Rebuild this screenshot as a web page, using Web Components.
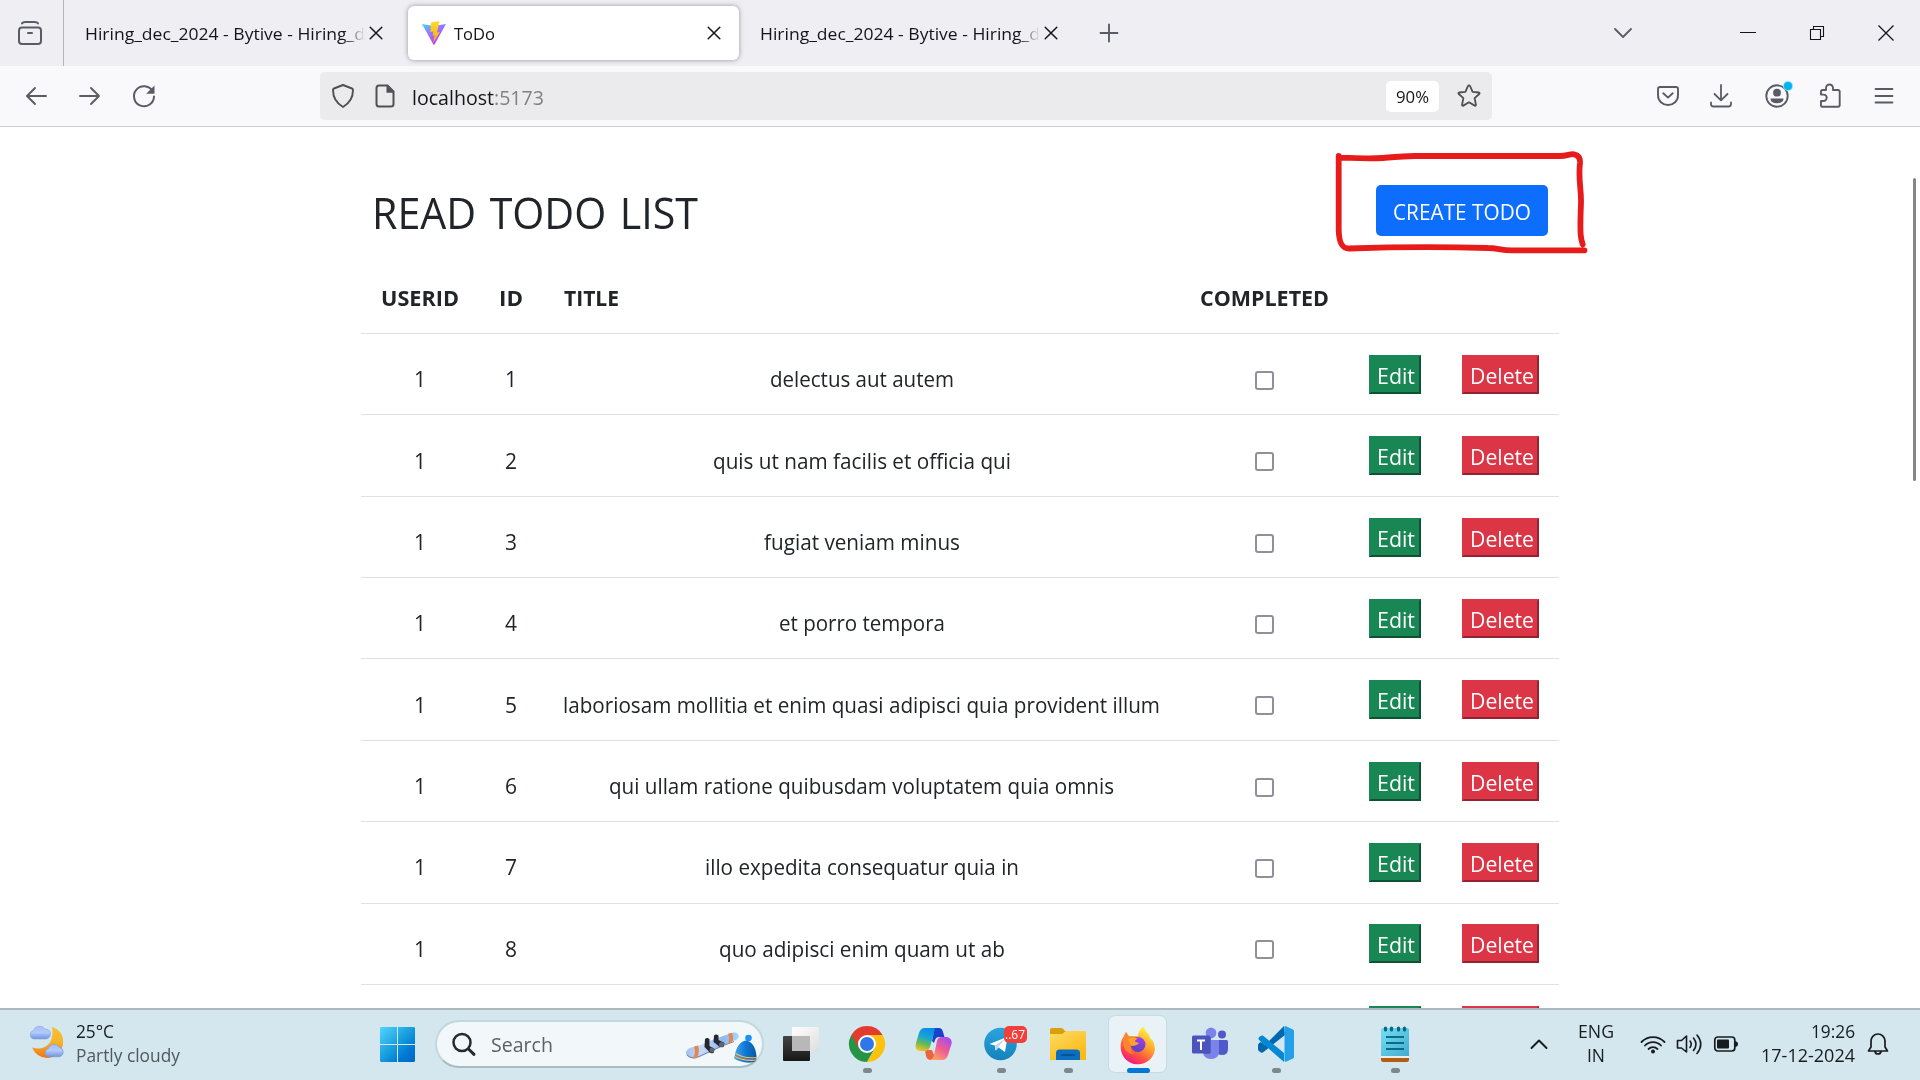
<!DOCTYPE html>
<html lang="en">
<head>
<meta charset="utf-8">
<title>ToDo</title>
<style>
html,body{margin:0;height:100%;overflow:hidden;background:#fff}
body{font-family:"Open Sans","Noto Sans",sans-serif}
</style>
</head>
<body>
<desktop-screen></desktop-screen>
<script>
const define = (name, css, html, init) => {
  customElements.define(name, class extends HTMLElement {
    connectedCallback() {
      if (this.shadowRoot) return;
      const root = this.attachShadow({ mode: 'open' });
      root.innerHTML = `<style>*{box-sizing:border-box}${css}</style>` + (typeof html === 'function' ? html(this) : html);
      if (init) init(this, root);
    }
  });
};

/* Text squeezed or stretched to a given advance width. */
define('fit-text',
  `:host{display:inline-block;white-space:nowrap;text-align:left}
   span{display:inline-block;transform-origin:0 50%}`,
  el => `<span>${el.getAttribute('text')}</span>`,
  (el, root) => {
    const s = root.querySelector('span'), w = +el.getAttribute('w');
    const n = s.getBoundingClientRect().width;
    el.style.width = w + 'px';
    if (n) s.style.transform = `scaleX(${w / n})`;
  });

const S = 'fill="none" stroke="currentColor" stroke-linecap="round" stroke-linejoin="round"';
const ICONS = {
  view: [24, 24, `<g ${S} stroke-width="2"><rect x="1" y="6.5" width="22" height="16.500" rx="3"/><path d="M4 2.400Q5 1 7 1H17Q19 1 20 2.400"/><path d="M10 12h4"/></g>`],
  x: [14, 14, `<path d="M1.200 1.200l11.600 11.600M12.800 1.200L1.200 12.800" ${S} stroke-width="1.500"/>`],
  plus: [20, 20, `<path d="M1.500 10h17M10 1.500v17" ${S} stroke-width="1.900"/>`],
  chev: [20, 12, `<path d="M2 2l8 8 8-8" ${S} stroke-width="1.800"/>`],
  min: [16, 16, `<path d="M0 7.500h16" stroke="currentColor" stroke-width="1"/>`],
  restore: [16, 16, `<path d="M1.500 4.500h10v10h-10zM4.500 4V1.500h10v10H12" fill="none" stroke="currentColor" stroke-width="1.100"/>`],
  close: [18, 18, `<path d="M1.500 1.500l15 15M16.500 1.500l-15 15" stroke="currentColor" stroke-width="1.300"/>`],
  back: [24, 24, `<path d="M22 12H3M11 4l-8 8 8 8" ${S} stroke-width="1.900"/>`],
  fwd: [24, 24, `<path d="M2 12h19M13 4l8 8-8 8" ${S} stroke-width="1.900"/>`],
  reload: [24, 24, `<path d="M20.500 7A10 10 0 1 0 22 12.500" ${S} stroke-width="2"/><path d="M22.500 1.500v8.300h-8.300z" fill="currentColor"/>`],
  shield: [24, 24, `<path d="M12 1l9 3.500q1 .4 1 1.500c0 8-4 13.500-10 17C6 19.500 2 14 2 6q0-1.100 1-1.500z" ${S} stroke-width="1.900"/>`],
  page: [24, 24, `<path d="M6 1.500h8.500l6 6V20a2.500 2.500 0 0 1-2.500 2.500H6A2.500 2.500 0 0 1 3.500 20V4A2.500 2.500 0 0 1 6 1.500z" ${S} stroke-width="2"/><path d="M13.500 1.500v7.200h7.200z" fill="currentColor"/>`],
  star: [24, 24, `<path d="M12 1.300q.8 0 1.100.8l2.500 5.700 6.100.7q1.500.3.500 1.500l-4.600 4.100 1.300 6.500q.2 1.500-1.200 1L12 18.300l-5.700 3.300q-1.400.5-1.200-1l1.300-6.500L1.800 10q-1-1.200.5-1.500l6.100-.7 2.500-5.700q.300-.8 1.100-.8z" ${S} stroke-width="1.800"/>`],
  pocket: [24, 24, `<path d="M4 3h16a2 2 0 0 1 2 2v6.500a10 9.500 0 0 1-20 0V5a2 2 0 0 1 2-2z" ${S} stroke-width="1.900"/><path d="M7.300 9.300L12 13.600l4.700-4.300" ${S} stroke-width="1.900"/>`],
  download: [24, 24, `<path d="M12 1v15M5.500 10l6.500 6.300 6.500-6.300M2 18.500V20a2.500 2.500 0 0 0 2.500 2.500h15A2.500 2.500 0 0 0 22 20v-1.500" ${S} stroke-width="1.800"/>`],
  account: [32, 30, `<circle cx="12" cy="18" r="10.700" ${S} stroke-width="1.900"/><circle cx="12" cy="14.700" r="3.900" fill="currentColor"/><path d="M5.500 20.500h13q0 4.700-6.500 4.700t-6.500-4.700z" fill="currentColor"/><circle cx="23" cy="8" r="5" fill="#8fe0fb"/><circle cx="23" cy="8" r="4" fill="#00b3f4"/>`],
  puzzle: [24, 26, `<path d="M3 23v-5h2.500a3.200 3.200 0 0 0 0-6.400H3V8.500A1.500 1.500 0 0 1 4.500 7H8V5a3.500 3.500 0 0 1 7 0v2h5a1.700 1.700 0 0 1 1.700 1.700V22a1.700 1.700 0 0 1-1.700 1.700H4A1 1 0 0 1 3 23z" ${S} stroke-width="1.900"/>`],
  menu: [24, 24, `<path d="M3.500 5h17M3.500 12h17M3.500 18.500h17" ${S} stroke-width="1.800"/>`],
  vite: [26, 26, `<defs><linearGradient id="a" x1="0" y1="0" x2=".6" y2="1"><stop stop-color="#41d1ff"/><stop offset=".5" stop-color="#9a72fe"/><stop offset="1" stop-color="#bd34fe"/></linearGradient><linearGradient id="b" x1="0" y1="0" x2="0" y2="1"><stop stop-color="#ffdc2e"/><stop offset="1" stop-color="#ffa800"/></linearGradient></defs><path d="M1 4l11.500 2L25 4 13.500 24.500q-.6.800-1.100 0z" fill="url(#a)"/><path d="M18.300 1L10 2.600l-.6 9.500 3-.6-.8 4.200 2-.5-1.500 7.800L18.800 12l-3 .6 1-3.600z" fill="url(#b)"/>`],
  weather: [38, 36, `<defs><linearGradient id="a" x1="0" y1="0" x2="0" y2="1"><stop stop-color="#f5c22e"/><stop offset=".5" stop-color="#f5b32b"/><stop offset="1" stop-color="#ee7414"/></linearGradient><linearGradient id="b" x1="0" y1="0" x2="0" y2="1"><stop stop-color="#a3bfff"/><stop offset=".5" stop-color="#b3caf9"/><stop offset="1" stop-color="#7195de"/></linearGradient></defs><path d="M24 3C32 5 36 12 35 20S26 34 19 34Q8 33 4 23.500C11 26 18 24 21.500 19S25 8 24 3z" fill="url(#a)"/><path id="c" d="M5 15a4.500 4.500 0 0 1 .5-8.500A6.500 6.500 0 0 1 17 5a5 5 0 0 1 1 10z" fill="url(#b)" stroke="#85a2df" stroke-width=".6"/><path d="M20 32.700a4.300 4.300 0 0 1 .3-8.200 6 6 0 0 1 10.700-1.500 5 5 0 0 1 .7 9.700z" fill="url(#b)" stroke="#6f97e2" stroke-width=".6"/>`],
  start: [35, 35, `<defs><linearGradient id="a" gradientUnits="userSpaceOnUse" x1="0" y1="0" x2="35" y2="35"><stop stop-color="#52d6ff"/><stop offset=".5" stop-color="#169bdc"/><stop offset=".75" stop-color="#0078d4"/><stop offset="1" stop-color="#0067c5"/></linearGradient></defs><path d="M1 0h16v17H0V1zM18 0h16l1 1v16H18zM0 18h17v17H1l-1-1zM18 18h17v16l-1 1H18z" fill="url(#a)"/>`],
  search: [24, 24, `<circle cx="10" cy="10.500" r="8.500" fill="none" stroke="#222b2d" stroke-width="2.500"/><path d="M16.500 17l5.500 5.300" stroke="#222b2d" stroke-width="3" stroke-linecap="round"/>`],
  snow: [72, 32, `<defs><linearGradient id="a" x1="0" y1="0" x2="1" y2="0"><stop stop-color="#a3c0f2"/><stop offset=".3" stop-color="#c6daf5"/><stop offset=".7" stop-color="#8fb7ee"/><stop offset="1" stop-color="#9bdcff"/></linearGradient><linearGradient id="b" x1="0" y1="0" x2="1" y2="0"><stop stop-color="#45a7ec"/><stop offset=".5" stop-color="#0f78d4"/><stop offset="1" stop-color="#0859a8"/></linearGradient></defs><path d="M1 22Q0 18 6 15.500L16 13 27 8 45 1.500Q52-1 53.500 3T48 9L13 26Q4 28 1 22z" fill="url(#a)"/><path d="M2 23q4 4.500 12 1.500L36 14.500l13-5" fill="none" stroke="#6987bd"/><path d="M9 14.500l4-1q2 6-1 12.500l-4 .7q3-6 1-12.200zM43 1.800l4-1q2 5 0 9.500l-4 1.700q2-6 0-10.200z" fill="#e7854e"/><path d="M20 7q2-2 4.500 0v7l5 3-1 4q-4 1-5-2l-4-4zM29 3.500q2-2 4.500 0V8l6 3-1 4q-4 1-6-2l-4-3z" fill="#25282e"/><circle cx="27" cy="18" r="2.500" fill="#62656c"/><circle cx="36.500" cy="12.500" r="2.500" fill="#62656c"/><path d="M49.700 24Q52 10 61 8.500Q70 10 71.500 24L71 29Q66 32 58 30T49 26z" fill="url(#b)"/><circle cx="63.500" cy="6" r="3.300" fill="#1d90f5"/><path d="M50.500 21.500Q60 27 71.500 25.500M49.700 24.500Q60 29.500 71.500 28" stroke="#e3c56b" stroke-width="1.100" fill="none"/><path d="M50 23.500Q60 28.500 71.500 27" stroke="#d47440" stroke-width=".8" fill="none"/>`],
  taskview: [36, 36, `<defs><linearGradient id="a" x1="0" y1="0" x2="0" y2="1"><stop stop-color="#444"/><stop offset="1" stop-color="#171717"/></linearGradient><linearGradient id="b" x1="0" y1="0" x2="1" y2="1"><stop stop-color="#fff"/><stop offset="1" stop-color="#dedede"/></linearGradient></defs><rect y="10" width="27" height="25" rx="1" fill="url(#a)"/><rect x="9" y="1" width="27" height="24" rx="1" fill="url(#b)"/><path d="M9 10h18v15H9z" fill="#b8b8b8"/>`],
  chrome: [36, 36, `<path d="M2.400 9A18 18 0 0 0 18 36L25.800 22.500 18 18z" fill="#269447"/><path d="M18 9H33.600A18 18 0 0 0 2.400 9L10.200 22.500z" fill="#e33b2e"/><path d="M33.600 9H18l7.800 13.500L18 36A18 18 0 0 0 33.600 9z" fill="#fcc20e"/><circle cx="18" cy="18" r="9" fill="#fff"/><circle cx="18" cy="18" r="7" fill="#2f76e8"/>`],
  copilot: [37, 34, `<defs><linearGradient id="a" x1=".6" y1="0" x2=".3" y2="1"><stop stop-color="#088be8"/><stop offset=".4" stop-color="#17a5d7"/><stop offset=".7" stop-color="#66b957"/><stop offset="1" stop-color="#f3c222"/></linearGradient><linearGradient id="b" x1=".8" y1="0" x2=".2" y2="1"><stop stop-color="#a44af0"/><stop offset=".5" stop-color="#f15c92"/><stop offset="1" stop-color="#fca765"/></linearGradient></defs><path d="M10 23h7l4 10h-5q-4 0-5-4z" fill="#ed633c"/><path d="M9 1h14q-3 1-4 5l-4 14q-1.300 4-5 4H5q-6-1-4-8L4 6Q5.500 1.500 9 1z" fill="url(#a)"/><path d="M20 1h4q3 0 4 4l1.500 5H24q-3 0-4 3l-1 3-2-2 2-9q1-3 1-4z" fill="#1741cf"/><path d="M27 10h5q5.500 1.500 4.500 7L33 28q-1.500 5-6 5H15q3-1 4-5l3-14q1-4 5-4z" fill="url(#b)"/>`],
  telegram: [38, 38, `<defs><linearGradient id="a" x1="0" y1="0" x2="0" y2="1"><stop stop-color="#2aa4df"/><stop offset="1" stop-color="#1582bb"/></linearGradient></defs><circle cx="18.500" cy="19" r="16.300" fill="url(#a)"/><path d="M7.500 19L25.500 11.700 23 27l-6.500-4.500-3 3-.7-5z" fill="#fff"/><path d="M13 20.500L23 14l-7 8-2 3.500z" fill="#b9d9e9"/>`],
  folder: [36, 34, `<defs><linearGradient id="a" x1="0" y1="0" x2=".6" y2="1"><stop stop-color="#ffdc65"/><stop offset="1" stop-color="#fbb914"/></linearGradient></defs><path d="M0 3q0-2 2-2h9q2 0 4 3h20v5H0z" fill="#dba009"/><path d="M0 7h12l4-3h19q1 0 1 1v28H0z" fill="url(#a)"/><path d="M6 33v-7q0-3.500 3.500-3.500h17Q30 22.500 30 26v7z" fill="#0a6fc0"/><path d="M11 28h14" stroke="#034a88" stroke-width="1.500"/>`],
  firefox: [36, 36, `<defs><linearGradient id="a" x1=".8" y1=".1" x2=".3" y2="1"><stop stop-color="#fff044"/><stop offset=".4" stop-color="#ffa22b"/><stop offset=".75" stop-color="#ff4a45"/><stop offset="1" stop-color="#ef138f"/></linearGradient><linearGradient id="b" x1=".7" y1="0" x2=".3" y2="1"><stop stop-color="#a23cf6"/><stop offset="1" stop-color="#5543b6"/></linearGradient></defs><path d="M18 10Q19 3 23.500.5 25 5 29 8.500L31 14l1-1q3 5 3 10A17.200 17.200 0 0 1 .7 21Q.5 14 4 10L6 6l3 4z" fill="url(#a)"/><path d="M4 10l2-4 3 5q5-1 8 1-4 0-3 4l5 1q-1 4-8 4Q10 26 14 28Q8 28 5 23Q2 17 4 10z" fill="#fd8430"/><circle cx="18" cy="18.500" r="7.500" fill="url(#b)"/><path d="M8 13q6-3 10 0-3 .4-3 2.500l4 1.500q-2 3-8 3-2-4-3-7z" fill="#ffa12d"/>`],
  teams: [36, 34, `<circle cx="19" cy="6" r="5.400" fill="#7b83eb"/><circle cx="30" cy="7.500" r="4" fill="#5059c9"/><path d="M25 13h9.500q1.500 0 1.500 1.500V22q0 6-6 6t-5-5z" fill="#5059c9"/><path d="M11 13h16v11q0 8-8 8t-8-8z" fill="#7b83eb"/><path d="M11 9h6q2 0 2 2v14q0 2-2 2h-5z" fill="#5b62c5"/><rect y="8.500" width="18" height="18" rx="1.500" fill="#4b53bc"/><path d="M5 12.500h8v2h-3V23H8v-8.500H5z" fill="#fff"/>`],
  vscode: [36, 36, `<path d="M26 0L7 19l-4-3-2 1-1 2 0 5 2 2q2 1.500 3.500 0L27 9z" fill="#0068ae"/><path d="M4.500 9.300L1 11q-1 1.500 0 3L26 36V27z" fill="#0788d2"/><path d="M26.500.3Q27 0 28 .3l7 3.300q1 .5 1 1.500v26q0 1-1 1.500l-7 3.100q-1 .3-1.500-.7z" fill="#249fe9"/>`],
  notepad: [28, 36, `<defs><linearGradient id="a" x1="0" y1="0" x2="1" y2="1"><stop stop-color="#74dff2"/><stop offset="1" stop-color="#43abd0"/></linearGradient></defs><path d="M0 29h28v5q0 2-2 2H2q-2 0-2-2z" fill="#b35d13"/><path d="M0 29h28v3H0z" fill="#eee"/><path d="M0 4q0-2 2-2h24q2 0 2 2v26H0z" fill="url(#a)"/><path d="M4.500 2v2M10.500 2v2M17.500 2v2M23.500 2v2" stroke="#086684" stroke-width="3.200" stroke-linecap="round"/><path d="M5 11h18M5 17h18M5 23h18" stroke="#0a6c88" stroke-width="1.900"/>`],
  up: [18, 12, `<path d="M1.500 10L9 2.500l7.500 7.500" ${S} stroke-width="2"/>`],
  wifi: [26, 20, `<g ${S} stroke-width="1.800"><path d="M1.500 8a16 16 0 0 1 23 0M5 11.500a11 11 0 0 1 16 0M8.500 15a6.500 6.500 0 0 1 9 0"/></g><circle cx="13" cy="17.500" r="2" fill="currentColor"/>`],
  sound: [26, 22, `<g ${S} stroke-width="1.600"><path d="M1.500 7.500h4L10.500 3v16L5.500 15h-4z"/><path d="M14 8q2.500 3 0 6.500M17.500 5q5 6 0 12.500M21 2q7.500 9 0 18.500"/></g>`],
  battery: [26, 18, `<rect x="1.800" y="2" width="20" height="14" rx="3" ${S} stroke-width="1.700"/><rect x="4" y="4.500" width="12" height="9" rx="1" fill="currentColor"/><path d="M22 6q3 .5 3 3t-3 3z" fill="currentColor"/>`],
  bell: [22, 24, `<path d="M11 2a7 7 0 0 1 7 7v6l2.500 4h-19L4 15V9a7 7 0 0 1 7-7zM8 19.500q.5 2.500 3 2.500t3-2.500" ${S} stroke-width="1.700"/>`]
};
define('ui-icon', `:host{display:block;flex:none}svg{display:block;overflow:visible}`, el => {
  const [w, h, p] = ICONS[el.getAttribute('name')];
  return `<svg width="${w}" height="${h}" viewBox="0 0 ${w} ${h}">${p}</svg>`;
});

define('browser-tab',
  `:host{display:flex;align-items:center;height:54px;flex:none;font-size:17.200px;line-height:24px;color:#15141a;border-radius:6px;padding-left:16px}
   :host([active]){background:#fff;box-shadow:0 0 5px rgba(0,0,0,.38)}
   .t{height:24px;white-space:nowrap;flex:none;margin-top:2px}
   :host(:not([active])) .t{width:281px;-webkit-mask-image:linear-gradient(90deg,#000 258px,transparent 280px);mask-image:linear-gradient(90deg,#000 258px,transparent 280px)}
   :host([active]) .t{width:250px;margin-left:7px}
   .x{margin-left:3px}`,
  el => `<slot name="icon"></slot><div class="t"><fit-text w="${el.getAttribute('w')}" text="${el.getAttribute('label')}"></fit-text></div><ui-icon class="x" name="x"></ui-icon>`);

define('tab-strip',
  `:host{display:flex;align-items:center;height:66px;background:#efeef3;color:#5b5b66}
   .view{width:64px;height:66px;border-right:1px solid #b4b4ba;display:flex;align-items:center;padding-left:18px}
   browser-tab{width:331px}.c{color:#15141a}`,
  `<div class="view"><ui-icon name="view"></ui-icon></div>
   <browser-tab style="margin-left:5px;width:335px" label="Hiring_dec_2024 - Bytive - Hiring_d" w="280"></browser-tab>
   <browser-tab style="margin-left:4px;padding-left:13px" active label="ToDo" w="41"><ui-icon slot="icon" name="vite"></ui-icon></browser-tab>
   <browser-tab style="margin-left:5px" label="Hiring_dec_2024 - Bytive - Hiring_d" w="280"></browser-tab>
   <ui-icon name="plus" style="margin-left:24px"></ui-icon>
   <ui-icon name="chev" style="margin-left:494px"></ui-icon>
   <ui-icon class="c" name="min" style="margin-left:107px"></ui-icon>
   <ui-icon class="c" name="restore" style="margin-left:53px"></ui-icon>
   <ui-icon class="c" name="close" style="margin-left:52px"></ui-icon>`);

define('nav-toolbar',
  `:host{display:flex;align-items:center;height:61px;background:#f9f9fb;border-bottom:1px solid #ccccd1;color:#5b5b66;padding-left:24px}
   .url{width:1172px;height:48px;border-radius:5px;background:#ebebed;margin-left:164px;display:flex;align-items:center;padding-left:11px;font-size:20.800px;line-height:30px;color:#4f4f56;flex:none}
   .host,.port{margin-top:2px}.host{color:#15141a}.port{color:#818185}
   .zoom{width:53px;height:31px;background:#fff;border-radius:5px;margin-left:842px;font-size:16.600px;line-height:32px;color:#15141a;display:flex;justify-content:center}`,
  `<ui-icon name="back"></ui-icon><ui-icon name="fwd" style="margin-left:30px"></ui-icon><ui-icon name="reload" style="margin-left:30px"></ui-icon>
   <div class="url"><ui-icon name="shield"></ui-icon><ui-icon name="page" style="margin-left:18px"></ui-icon>
     <fit-text class="host" style="margin-left:15px" w="82" text="localhost"></fit-text><fit-text class="port" w="50" text=":5173"></fit-text>
     <div class="zoom"><fit-text w="33" text="90%"></fit-text></div><ui-icon name="star" style="margin-left:18px"></ui-icon></div>
   <ui-icon name="pocket" style="margin-left:164px"></ui-icon><ui-icon name="download" style="margin-left:29px"></ui-icon>
   <ui-icon name="account" style="margin:-6px 0 0 32px"></ui-icon><ui-icon name="puzzle" style="margin-left:21px"></ui-icon><ui-icon name="menu" style="margin-left:30px"></ui-icon>`);

const GRID = 'display:grid;grid-template-columns:118px 64.500px 636.500px 168px 93px 118px;';
define('todo-action',
  `:host{display:block;text-align:left;width:52px;height:39px;border:2px solid;border-color:#198754 #0f5132 #0f5132 #198754;background:#198754;color:#fff;line-height:30px;padding:4px 0 0 5.500px;font-size:22.200px}
   :host([danger]){width:77px;background:#dc3545;border-color:#dc3545 #932330 #932330 #dc3545}`,
  el => el.hasAttribute('label') ? `<fit-text w="${el.getAttribute('w')}" text="${el.getAttribute('label')}"></fit-text>` : '');

define('todo-row',
  `:host{${GRID}height:81.370px;border-bottom:1px solid #dee2e6;font-size:22.200px;line-height:30px;color:#212529;flex:none}
   div{text-align:center;padding-top:30.300px}.a{padding:20.800px 0 0 21px}
   i{display:block;width:19px;height:19px;border:2px solid #8f8f9d;border-radius:3px;margin:6.500px auto 0;background:#fff}`,
  el => `<div><fit-text w="12" text="1"></fit-text></div><div><fit-text w="12" text="${el.getAttribute('n')}"></fit-text></div>
   <div><fit-text w="${el.getAttribute('w')}" text="${el.getAttribute('label')}"></fit-text></div><div><i></i></div>
   <div class="a"><todo-action label="Edit" w="38"></todo-action></div><div class="a"><todo-action danger label="Delete" w="64"></todo-action></div>`);

const TODOS = [['delectus aut autem', 184], ['quis ut nam facilis et officia qui', 298], ['fugiat veniam minus', 196], ['et porro tempora', 166], ['laboriosam mollitia et enim quasi adipisci quia provident illum', 597], ['qui ullam ratione quibusdam voluptatem quia omnis', 505], ['illo expedita consequatur quia in', 314], ['quo adipisci enim quam ut ab', 286]];
define('todo-table',
  `:host{display:flex;flex-direction:column}
   .h,.next{${GRID}flex:none}
   .h{height:63px;border-bottom:1px solid #dee2e6;font-size:22.200px;line-height:30px;font-weight:700;color:#212529}
   .h div{padding:12px 0 0 20px}
   .next{height:24px;overflow:hidden}.next div{padding:21px 0 0 21px}.next .e{grid-column:5}`,
  `<div class="h"><div><fit-text w="78" text="USERID"></fit-text></div><div><fit-text w="24" text="ID"></fit-text></div><div><fit-text w="55" text="TITLE"></fit-text></div><div><fit-text w="129" text="COMPLETED"></fit-text></div></div>`
  + TODOS.map(([t, w], i) => `<todo-row n="${i + 1}" label="${t}" w="${w}"></todo-row>`).join('')
  + `<div class="next"><div class="e"><todo-action></todo-action></div><div><todo-action danger></todo-action></div></div>`);

define('todo-page',
  `:host{display:flex;justify-content:space-between;height:881px;overflow:hidden;background:#fff;position:relative}
   main{width:1198px;margin-left:361px}
   header{display:flex;justify-content:space-between;height:144px;padding:58px 11px 0 11px}
   h1{margin:0;font-weight:400;font-size:43.500px;line-height:56px;color:#212529;height:56px;word-spacing:3px}
   .btn{width:172px;height:51px;border-radius:5px;background:#0d6efd;color:#fff;font-size:22.200px;line-height:30px;display:flex;justify-content:center;padding-top:12px}
   .bar{width:3px;height:303px;margin:51px 4px 0 0;background:#868686;border-radius:2px}
   svg{position:absolute;left:1330px;top:18px}`,
  `<main><header><h1><fit-text w="326" text="READ TODO LIST"></fit-text></h1><div class="btn"><fit-text w="138" text="CREATE TODO"></fit-text></div></header><todo-table></todo-table></main>
   <div class="bar"></div>
   <svg width="270" height="120" viewBox="1330 145 270 120" fill="none" stroke="#e81b1b" stroke-width="5.800" stroke-linecap="round" stroke-linejoin="round"><path d="M1338.700 156V230C1339 243 1342 248.500 1349 248.500Q1420 246 1488 248C1498 248 1500 250.300 1512 250.300H1584.500M1341 157.700C1353 158 1370 159 1382 158S1405 156 1415 156H1560C1567 156 1570 153.700 1574 154.300Q1580.500 155.500 1580 163C1578 179 1581.500 190 1581 203S1580 226 1580.700 235Q1581 239 1582.700 244.500"/></svg>`);

define('task-app',
  `:host{display:grid;place-items:center;height:56px;width:57px;position:relative;border-radius:6px;flex:none}
   :host([active]){background:#e9f2f7;box-shadow:0 0 0 1px #c9dbe2}
   .dot{position:absolute;bottom:-1px;left:50%;width:9px;height:5px;margin-left:-4px;border-radius:3px;background:#7c888c}
   :host([active]) .dot{width:23px;margin-left:-11px;background:#0078d4}`,
  el => `<ui-icon name="${el.getAttribute('icon')}"></ui-icon><slot></slot>${el.hasAttribute('open') ? '<div class="dot"></div>' : ''}`);

define('task-bar',
  `:host{display:flex;height:72px;background:#d4e7ee;border-top:2px solid #abb9be;font-size:17.700px;line-height:24px;color:#171c1e;padding-bottom:2px;align-items:center}
   .w{display:flex;width:380px;padding-left:28px;flex:none}.col{display:flex;flex-direction:column;margin-top:-3px}
   .w .col{margin-top:-2px}
   .s{width:329px;height:48px;flex:none;margin-left:20px;border-radius:24px;background:#f2f7fa;border:2px solid #c3d7de;border-bottom-color:#a9bcc4;display:flex;align-items:center;padding-left:15px;font-size:20.300px;color:#5b6164}
   .badge{position:absolute;left:32px;top:10px;width:23px;height:17px;border-radius:5px;background:#f1403b;color:#fff;font-size:13px;line-height:16px;padding-left:1px}
   .e{align-items:center}.d{align-items:flex-end}`,
  `<div class="w"><ui-icon name="weather" style="margin-top:3px"></ui-icon><div class="col" style="margin-left:10px"><fit-text w="38" text="25°C"></fit-text><fit-text w="104" style="color:#50585b" text="Partly cloudy"></fit-text></div></div>
   <ui-icon name="start"></ui-icon>
   <div class="s"><ui-icon name="search"></ui-icon><fit-text style="margin-left:15px" w="62" text="Search"></fit-text><ui-icon name="snow" style="margin:7px 0 0 132px"></ui-icon></div>
   <task-app icon="taskview" style="margin-left:8px"></task-app>
   <task-app icon="chrome" open style="margin-left:9px"></task-app>
   <task-app icon="copilot" style="margin-left:10px"></task-app>
   <task-app icon="telegram" open style="margin-left:10px"><div class="badge"><fit-text w="20" text="..67"></fit-text></div></task-app>
   <task-app icon="folder" open style="margin-left:10px"></task-app>
   <task-app icon="firefox" open active style="margin-left:13px"></task-app>
   <task-app icon="teams" style="margin-left:15px"></task-app>
   <task-app icon="vscode" open style="margin-left:9px"></task-app>
   <task-app icon="notepad" open style="margin-left:62px"></task-app>
   <ui-icon name="up" style="margin-left:107px"></ui-icon>
   <div class="col e" style="margin-left:30px"><fit-text w="36" text="ENG"></fit-text><fit-text w="18" text="IN"></fit-text></div>
   <ui-icon name="wifi" style="margin-left:26px"></ui-icon><ui-icon name="sound" style="margin-left:10px"></ui-icon><ui-icon name="battery" style="margin-left:11px"></ui-icon>
   <div class="col d" style="margin-left:22px"><fit-text w="44" text="19:26"></fit-text><fit-text w="94" text="17-12-2024"></fit-text></div>
   <ui-icon name="bell" style="margin-left:12px"></ui-icon>`);

define('desktop-screen', `:host{display:flex;flex-direction:column;width:1920px;height:1080px;overflow:hidden}tab-strip,nav-toolbar,todo-page,task-bar{flex:none}`,
  `<tab-strip></tab-strip><nav-toolbar></nav-toolbar><todo-page></todo-page><task-bar></task-bar>`);
</script>
</body>
</html>
